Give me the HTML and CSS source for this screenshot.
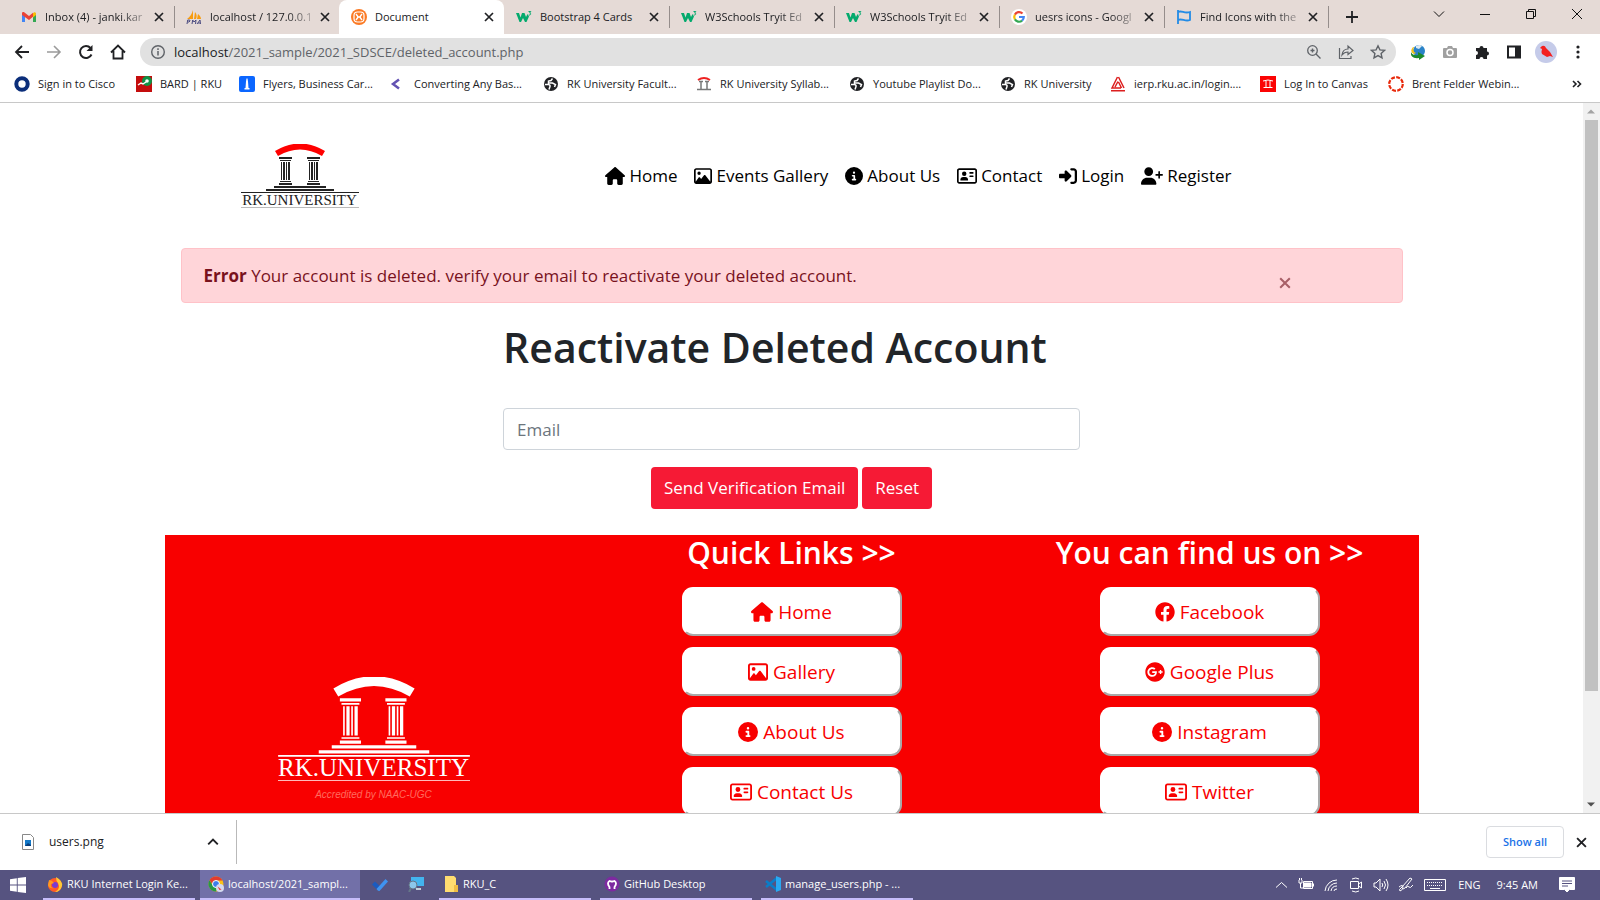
FILE: index.html
```html
<!DOCTYPE html>
<html lang="en">
<head>
<meta charset="utf-8">
<title>Document</title>
<link rel="stylesheet" href="styles.css">
</head>
<body>
<svg class="sprite" aria-hidden="true">
  <symbol id="house" viewBox="0 0 576 512"><path d="M575.8 255.500c0 18-15 32.100-32 32.100h-32l.7 160.200c0 2.700-.2 5.400-.5 8.100V472c0 22.100-17.900 40-40 40H392c-22.100 0-40-17.900-40-40V384c0-17.700-14.300-32-32-32H256c-17.700 0-32 14.300-32 32v88c0 22.100-17.900 40-40 40H104c-22.100 0-40-17.900-40-40V287.600H32c-18 0-32-14-32-32.100c0-9 3-17 10-24L266.400 8c7-7 15-8 22-8s15 2 21 7L564.800 231.500c8 7 12 15 11 24z"/></symbol>
  <symbol id="image" viewBox="0 0 512 512"><path d="M448 80c8.800 0 16 7.200 16 16V415.800l-5-6.500-136-176c-4.500-5.900-11.600-9.300-19-9.300s-14.400 3.400-19 9.300L202 340.700l-30.500-42.700C167 291.700 159.800 288 152 288s-15 3.700-19.500 10.100l-80 112L48 416.300V96c0-8.800 7.200-16 16-16H448zM64 32C28.700 32 0 60.700 0 96V416c0 35.300 28.700 64 64 64H448c35.300 0 64-28.700 64-64V96c0-35.300-28.700-64-64-64H64zm80 192a48 48 0 1 0 0-96 48 48 0 1 0 0 96z"/></symbol>
  <symbol id="info" viewBox="0 0 512 512"><path d="M256 512A256 256 0 1 0 256 0a256 256 0 1 0 0 512zM216 336h24V272H216c-13.300 0-24-10.700-24-24s10.700-24 24-24h48c13.300 0 24 10.700 24 24v88h8c13.300 0 24 10.700 24 24s-10.700 24-24 24H216c-13.300 0-24-10.700-24-24s10.700-24 24-24zm40-208a32 32 0 1 1 0 64 32 32 0 1 1 0-64z"/></symbol>
  <symbol id="card" viewBox="0 0 576 512"><path d="M512 80c8.800 0 16 7.200 16 16V416c0 8.800-7.200 16-16 16H64c-8.800 0-16-7.200-16-16V96c0-8.800 7.200-16 16-16H512zM64 32C28.700 32 0 60.700 0 96V416c0 35.300 28.700 64 64 64H512c35.300 0 64-28.700 64-64V96c0-35.300-28.700-64-64-64H64zM208 256a64 64 0 1 0 0-128 64 64 0 1 0 0 128zm-32 32c-44.200 0-80 35.800-80 80c0 8.800 7.200 16 16 16H304c8.800 0 16-7.200 16-16c0-44.200-35.800-80-80-80H176zM376 144c-13.300 0-24 10.700-24 24s10.700 24 24 24h80c13.300 0 24-10.700 24-24s-10.700-24-24-24H376zm0 96c-13.300 0-24 10.700-24 24s10.700 24 24 24h80c13.300 0 24-10.700 24-24s-10.700-24-24-24H376z"/></symbol>
  <symbol id="login" viewBox="0 0 512 512"><path d="M217.900 105.900L340.700 228.700c7.200 7.200 11.300 17.100 11.300 27.300s-4.100 20.100-11.300 27.300L217.900 406.100c-6.400 6.400-15 9.900-24 9.900c-18.700 0-33.900-15.200-33.900-33.900V320H32c-17.700 0-32-14.300-32-32V224c0-17.700 14.300-32 32-32H160V129.900c0-18.700 15.200-33.900 33.900-33.900c9 0 17.600 3.600 24 9.900zM352 416h64c17.700 0 32-14.300 32-32V128c0-17.700-14.300-32-32-32H352c-17.700 0-32-14.300-32-32s14.300-32 32-32h64c53 0 96 43 96 96V384c0 53-43 96-96 96H352c-17.700 0-32-14.300-32-32s14.300-32 32-32z"/></symbol>
  <symbol id="userplus" viewBox="0 0 640 512"><path d="M96 128a128 128 0 1 1 256 0A128 128 0 1 1 96 128zM0 482.300C0 383.800 79.800 304 178.300 304h91.400C368.200 304 448 383.800 448 482.300c0 16.400-13.300 29.700-29.700 29.700H29.700C13.300 512 0 498.700 0 482.300zM504 312V248H440c-13.300 0-24-10.700-24-24s10.700-24 24-24h64V136c0-13.300 10.700-24 24-24s24 10.700 24 24v64h64c13.300 0 24 10.700 24 24s-10.700 24-24 24H552v64c0 13.300-10.700 24-24 24s-24-10.700-24-24z"/></symbol>
  <symbol id="facebook" viewBox="0 0 512 512"><path d="M504 256C504 119 393 8 256 8S8 119 8 256c0 123.780 90.690 226.380 209.250 245V327.690h-63V256h63v-54.640c0-62.150 37-96.480 93.670-96.480 27.140 0 55.520 4.840 55.520 4.840v61h-31.280c-30.800 0-40.410 19.120-40.410 38.730V256h68.780l-11 71.690h-57.780V501C413.310 482.380 504 379.780 504 256z"/></symbol>
  <symbol id="gplus" viewBox="-8 0 512 512"><path d="M248 8C111.100 8 0 119.100 0 256s111.100 248 248 248 248-111.100 248-248S384.900 8 248 8zm-70.700 372c-68.800 0-124-55.500-124-124s55.200-124 124-124c31.300 0 60.100 11 83 32.300l-33.600 32.600c-13.200-12.900-31.300-19.100-49.400-19.100-42.900 0-77.200 35.500-77.200 78.100s34.200 78.100 77.200 78.100c32.600 0 64.900-19.100 70.100-53.300h-70.100v-42.600h116.900c1.300 6.800 1.900 13.600 1.900 20.700 0 70.800-47.500 121.200-118.800 121.200zm230.200-106.200v35.500H372v-35.500h-35.500v-35.500H372v-35.500h35.500v35.500h35.200v35.500h-35.200z"/></symbol>
  <symbol id="cross" viewBox="0 0 10 10"><path d="M1 1l8 8M9 1l-8 8" fill="none" stroke="currentColor" stroke-width="1.700"/></symbol>
  <symbol id="w3" viewBox="0 0 16 16"><path d="M0 4h3l1.500 4.500L6 4h2.500l1.500 4L11.500 5 13 7.500 10.500 13H9L7 9l-2 4H3.500z" fill="#04aa6d"/><path d="M12.500 2.500h2.300l-1.200 1.500c1.600 0 1.600 2.300-.9 2" fill="none" stroke="#04aa6d" stroke-width="1"/></symbol>
  <symbol id="globe" viewBox="0 0 16 16"><circle cx="8" cy="8" r="7" fill="#202124"/><path d="M2 8.500h3.500q2 .5 1.500 2L6 13.500M9.500 2.500L8 4.500 5.500 5v2h4l3 1.500-1 2.500" fill="none" stroke="#fff" stroke-width="1.500"/></symbol>
  <symbol id="columns" viewBox="0 0 118 56">
    <path d="M34 7Q59-8 84 7l-3 5Q59-1 37 12z" fill="var(--arch)"/>
    <g fill="currentColor">
      <path d="M38 13h13v2H38zM39 16h11v1H39zM39 37h11v1H39zM38 39h13v2H38zM66 13h13v2H66zM67 16h11v1H67zM67 37h11v1H67zM66 39h13v2H66zM33 42h52v2H33zM25 45h68v2H25zM0 48h118v1H0z"/>
      <path d="M40 18h1v18h-1zM42 18h2v18h-2zM45 18h1v18h-1zM47 18h2v18h-2zM68 18h1v18h-1zM70 18h2v18h-2zM73 18h1v18h-1zM75 18h2v18h-2z"/>
    </g>
  </symbol>
</svg>

<header class="browser">
  <div class="tabs">
    <div class="tab"><svg class="fav" viewBox="0 0 16 16"><path d="M1 4v9h3V7z" fill="#4285f4"/><path d="M15 4v9h-3V7z" fill="#34a853"/><path d="M12 4l2-1 1 1.500V6l-3 2.500z" fill="#fbbc04"/><path d="M1 6V4.500C1 3 2.500 2.700 3.500 3.500L8 7l4-3.200v4L8 11 1 6z" fill="#ea4335"/></svg><span class="title fade">Inbox (4) - janki.kar</span><button class="x" aria-label="Close tab"><svg><use href="#cross"/></svg></button></div>
    <div class="tab line-left"><svg class="fav" viewBox="0 0 16 16"><path d="M7 1v9H1c3-2 5-5 6-9zM9 3c2 2 2 5 1 7H8zM12 5c2 2 3 3 3 5h-4z" fill="#f89c0e"/><path d="M1 15l.7-4h2l.3 1-1 1H2M6 15l.7-4 1.300 2 2-2-.5 4M11 15l3-4 .5 4M12 14h2" fill="none" stroke="#4a4a80" stroke-width="1"/></svg><span class="title fade">localhost / 127.0.0.1</span><button class="x" aria-label="Close tab"><svg><use href="#cross"/></svg></button></div>
    <div class="tab active"><svg class="fav" viewBox="0 0 16 16"><circle cx="8" cy="8" r="8" fill="#fb7a24"/><rect x="3" y="3" width="10" height="10" rx="3.500" fill="none" stroke="#fff" stroke-width="1.200"/><path d="M5 5l2.200 3L5 11M11 5L8.800 8l2.200 3M6 8h4" fill="none" stroke="#fff" stroke-width="1.400"/></svg><span class="title">Document</span><button class="x" aria-label="Close tab"><svg><use href="#cross"/></svg></button></div>
    <div class="tab"><svg class="fav"><use href="#w3"/></svg><span class="title">Bootstrap 4 Cards</span><button class="x" aria-label="Close tab"><svg><use href="#cross"/></svg></button></div>
    <div class="tab line-left"><svg class="fav"><use href="#w3"/></svg><span class="title fade">W3Schools Tryit Ed</span><button class="x" aria-label="Close tab"><svg><use href="#cross"/></svg></button></div>
    <div class="tab line-left"><svg class="fav"><use href="#w3"/></svg><span class="title fade">W3Schools Tryit Ed</span><button class="x" aria-label="Close tab"><svg><use href="#cross"/></svg></button></div>
    <div class="tab line-left"><svg class="fav" viewBox="0 0 16 16"><circle cx="8" cy="8" r="8" fill="#fff"/><g fill="none" stroke-width="2.200"><path d="M11.500 4.500A4.800 4.800 0 0 0 3.900 5.600" stroke="#ea4335"/><path d="M3.900 5.600a4.800 4.800 0 0 0 0 4.800" stroke="#fbbc05"/><path d="M3.900 10.400a4.800 4.800 0 0 0 7.200 1.200" stroke="#34a853"/><path d="M11.100 11.600A4.800 4.800 0 0 0 12.800 8H8" stroke="#4285f4"/></g></svg><span class="title fade">uesrs icons - Googl</span><button class="x" aria-label="Close tab"><svg><use href="#cross"/></svg></button></div>
    <div class="tab line-left line-right"><svg class="fav" viewBox="0 0 16 16"><path d="M2 1v14M2 3c4-2 6 2 12 0v8c-5 2-8-2-12 0" fill="none" stroke="#228be6" stroke-width="1.800"/></svg><span class="title fade">Find Icons with the</span><button class="x" aria-label="Close tab"><svg><use href="#cross"/></svg></button></div>
    <button class="newtab" aria-label="New tab"><svg viewBox="0 0 12 12"><path d="M6 0v12M0 6h12" stroke="#202124" stroke-width="1.800"/></svg></button>
    <div class="winbtns">
      <button aria-label="Search tabs"><svg viewBox="0 0 12 12"><path d="M1 3.500l5 5 5-5" fill="none" stroke="#111" stroke-width="1"/></svg></button>
      <button aria-label="Minimize"><svg viewBox="0 0 12 12"><path d="M1 6.500h10" stroke="#111"/></svg></button>
      <button aria-label="Restore"><svg viewBox="0 0 12 12"><path d="M1.500 3.500h7v7h-7zM3.500 3.500v-2h7v7h-2" fill="none" stroke="#111"/></svg></button>
      <button aria-label="Close"><svg viewBox="0 0 12 12"><path d="M1 1l10 10M11 1L1 11" stroke="#111"/></svg></button>
    </div>
  </div>

  <div class="toolbar">
    <button class="tool" aria-label="Back"><svg viewBox="0 0 16 16"><path d="M15 8H2M8 2L2 8l6 6" fill="none" stroke="#202124" stroke-width="1.800"/></svg></button>
    <button class="tool" aria-label="Forward"><svg viewBox="0 0 16 16"><path d="M1 8h13M8 2l6 6-6 6" fill="none" stroke="#9b9b9b" stroke-width="1.600"/></svg></button>
    <button class="tool" aria-label="Reload"><svg viewBox="0 0 16 16"><path d="M13.500 10.500A6 6 0 1 1 12.500 4" fill="none" stroke="#202124" stroke-width="2"/><path d="M14.500 1v6h-6z" fill="#202124"/></svg></button>
    <button class="tool" aria-label="Home"><svg viewBox="0 0 16 16"><path d="M1 8.500L8 1.500l7 7M3.500 7v7.500h9V7" fill="none" stroke="#202124" stroke-width="1.800"/></svg></button>
    <div class="omnibox">
      <svg class="s16" viewBox="0 0 16 16"><circle cx="8" cy="8" r="6.300" fill="none" stroke="#5f6368" stroke-width="1.400"/><path d="M8 7v4.500M8 4.300v1.600" stroke="#5f6368" stroke-width="1.500"/></svg>
      <span class="url">localhost<span class="path">/2021_sample/2021_SDSCE/deleted_account.php</span></span>
      <svg class="s16 end" viewBox="0 0 16 16"><path d="M10 10l4.500 4.500M4.500 6.500h4M6.500 4.500v4" stroke="#5f6368" stroke-width="1.400"/><circle cx="6.500" cy="6.500" r="4.800" fill="none" stroke="#5f6368" stroke-width="1.300"/></svg>
      <svg class="s16" viewBox="0 0 16 16"><path d="M1.500 4v10.500H13V12M4 11c.500-4 3-6 6-6V2l5 4.500-5 4V8c-3 0-4.500 1-6 3z" fill="none" stroke="#5f6368" stroke-width="1.200"/></svg>
      <svg class="s16" viewBox="0 0 16 16"><path d="M8 1.800l1.900 4.100 4.500.500-3.300 3 .9 4.500L8 11.600l-4 2.300.9-4.500-3.300-3 4.500-.5z" fill="none" stroke="#5f6368" stroke-width="1.400"/></svg>
    </div>
    <button class="tool first" aria-label="Download manager"><svg viewBox="0 0 16 16"><circle cx="9" cy="7" r="6" fill="#2a83c8"/><path d="M6 2q4-2 6 0L9 5 6 4z" fill="#dfe9f0"/><path d="M1 8q2 4 7 3V8l7 4-6 4v-2Q0 15 1 8z" fill="#1c8a2c"/><path d="M3 3q-4 5 1 7l2-1Q2 7 4 3z" fill="#f0c219"/></svg></button>
    <button class="tool" aria-label="Screenshot"><svg viewBox="0 0 16 16"><path d="M2 4h3l1-2h4l1 2h3q1 0 1 1v8q0 1-1 1H2q-1 0-1-1V5q0-1 1-1z" fill="#a0a0a0"/><circle cx="8" cy="8.500" r="3" fill="#a0a0a0" stroke="#fff" stroke-width="1.500"/></svg></button>
    <button class="tool" aria-label="Extensions"><svg viewBox="0 0 16 16"><path d="M2 4h3.500a2 2 0 1 1 4 0H13v3.500a2 2 0 1 1 0 4V15H9.500a2 2 0 1 0-4 0H2v-4a2 2 0 1 0 0-4z" fill="#202124"/></svg></button>
    <button class="tool" aria-label="Side panel"><svg viewBox="0 0 16 16"><path d="M2 2.500h12v11H2z" fill="none" stroke="#202124" stroke-width="2"/><path d="M9 2h5v12H9z" fill="#202124"/></svg></button>
    <button class="tool avatar" aria-label="Profile"><svg viewBox="0 0 22 22"><circle cx="11" cy="11" r="11" fill="#c5cbe9"/><path d="M5 7l2-2q3-1 4 2l4 4 3 5-3-1-3 1-5-3Q6 11 7 8z" fill="#f32020"/></svg></button>
    <button class="tool" aria-label="Menu"><svg viewBox="0 0 16 16" fill="#202124"><circle cx="8" cy="3" r="1.600"/><circle cx="8" cy="8" r="1.600"/><circle cx="8" cy="13" r="1.600"/></svg></button>
  </div>

  <nav class="bookmarks">
    <a href="#"><svg viewBox="0 0 16 16"><circle cx="8" cy="8" r="5.700" fill="#fff" stroke="#0b2e7a" stroke-width="4"/></svg>Sign in to Cisco</a>
    <a href="#"><svg viewBox="0 0 16 16"><path d="M0 0h16v16H0z" fill="#c40d0d"/><circle cx="11" cy="5" r="5" fill="#0f9246"/><circle cx="11" cy="5" r="1.800" fill="#fff"/><path d="M2 9l3-2 2 1 3-2" stroke="#fff" fill="none" stroke-width="1.500"/></svg>BARD | RKU</a>
    <a href="#"><svg viewBox="0 0 16 16"><rect width="16" height="16" rx="2" fill="#0b66ff"/><path d="M7.500 2.500h1l.500 3 .5 6.500h1v1.500h-5V12h1L7 5.500z" fill="#fff"/></svg>Flyers, Business Car...</a>
    <a href="#"><svg viewBox="0 0 16 16"><path d="M9 3.500L3 8l6 4.500" fill="none" stroke="#6352b3" stroke-width="2.500"/></svg>Converting Any Bas...</a>
    <a href="#"><svg><use href="#globe"/></svg>RK University Facult...</a>
    <a href="#"><svg viewBox="0 0 16 16"><path d="M2 4q6-4 12 0" stroke="#e22" stroke-width="2" fill="none"/><path d="M5 5v8M11 5v8M3 5.500h4M9 5.500h4M1 13.500h14" stroke="#777" stroke-width="1.500"/></svg>RK University Syllab...</a>
    <a href="#"><svg><use href="#globe"/></svg>Youtube Playlist Do...</a>
    <a href="#"><svg><use href="#globe"/></svg>RK University</a>
    <a href="#"><svg viewBox="0 0 16 16"><path d="M7.500 1L2 12h9M8.500 1L14 12M8 5.500L5 11M8.500 6l3 6M1 14.800h14" fill="none" stroke="#dc1f1f" stroke-width="1.500"/></svg>ierp.rku.ac.in/login....</a>
    <a href="#"><svg viewBox="0 0 16 16"><path d="M0 0h16v16H0z" fill="#fb0404"/><path d="M3 5q5-2 10 0M6 5v6M10 5v6M3.500 11.500h9" stroke="#fff" fill="none"/></svg>Log In to Canvas</a>
    <a href="#"><svg viewBox="0 0 16 16"><circle cx="8" cy="8" r="6.800" fill="none" stroke="#e8290b" stroke-width="2.200" stroke-dasharray="4 1.340"/></svg>Brent Felder Webin...</a>
    <button class="more" aria-label="More bookmarks"><svg viewBox="0 0 10 10"><path d="M1 2l3 3-3 3M5.500 2l3 3-3 3" fill="none" stroke="#202124" stroke-width="1.600"/></svg></button>
  </nav>
</header>

<div class="viewport">
  <div class="page">
    <div class="container">
      <div class="masthead">
        <a class="logo" href="#" aria-label="RK University"><svg><use href="#columns"/></svg><span>RK.UNIVERSITY</span></a>
        <nav class="menu">
          <a href="#"><svg class="wide"><use href="#house"/></svg>Home</a>
          <a href="#"><svg><use href="#image"/></svg>Events Gallery</a>
          <a href="#"><svg><use href="#info"/></svg>About Us</a>
          <a href="#"><svg class="wide"><use href="#card"/></svg>Contact</a>
          <a href="#"><svg><use href="#login"/></svg>Login</a>
          <a href="#"><svg class="wider"><use href="#userplus"/></svg>Register</a>
        </nav>
      </div>
      <main>
        <div class="alert" role="alert"><p><strong>Error</strong> Your account is deleted. verify your email to reactivate your deleted account.</p><button aria-label="Dismiss"><svg><use href="#cross"/></svg></button></div>
        <form class="reactivate">
          <h1>Reactivate Deleted Account</h1>
          <input type="email" placeholder="Email" aria-label="Email">
          <div class="actions"><button type="button">Send Verification Email</button><button type="reset">Reset</button></div>
        </form>
      </main>
      <footer class="footer">
        <div class="brand"><div class="biglogo"><svg><use href="#columns"/></svg><span class="name">RK.UNIVERSITY</span><span class="motto">Accredited by NAAC-UGC</span></div></div>
        <section><h2>Quick Links &gt;&gt;</h2>
          <button><svg class="wide"><use href="#house"/></svg>Home</button>
          <button><svg><use href="#image"/></svg>Gallery</button>
          <button><svg><use href="#info"/></svg>About Us</button>
          <button><svg class="wide"><use href="#card"/></svg>Contact Us</button>
        </section>
        <section><h2>You can find us on &gt;&gt;</h2>
          <button><svg><use href="#facebook"/></svg>Facebook</button>
          <button><svg><use href="#gplus"/></svg>Google Plus</button>
          <button><svg><use href="#info"/></svg>Instagram</button>
          <button><svg class="wide"><use href="#card"/></svg>Twitter</button>
        </section>
      </footer>
    </div>
  </div>
  <div class="scrollbar"><svg viewBox="0 0 16 16"><path d="M4 10l4-4 4 4z" fill="#a3a3a3"/></svg><div class="thumb"></div><svg viewBox="0 0 16 16"><path d="M4 6l4 4 4-4z" fill="#505050"/></svg></div>
</div>

<div class="downloads">
  <div class="file"><svg class="s16" viewBox="0 0 16 16"><path d="M2.500.500h8l3 3v12h-11z" fill="#fff" stroke="#888"/><path d="M5 6h6v6H5z" fill="#1379c8"/><path d="M5 12l3-3 3 2v1z" fill="#0a3f7c"/></svg><span>users.png</span><button aria-label="File options"><svg viewBox="0 0 10 10"><path d="M1 7l4-4 4 4" fill="none" stroke="#202124" stroke-width="1.600"/></svg></button></div>
  <button class="showall">Show all</button>
  <button class="closebar" aria-label="Close downloads"><svg><use href="#cross"/></svg></button>
</div>

<div class="taskbar">
  <button class="start" aria-label="Start"><svg viewBox="0 0 16 16"><path d="M0 2.200l6.800-.9v6.200H0zM7.700 1.100L16 0v7.500H7.700zM0 8.400h6.800v6.300L0 13.800zM7.700 8.400H16V16l-8.300-1.100z" fill="#fff"/></svg></button>
  <button class="task open"><svg viewBox="0 0 16 16"><circle cx="8" cy="9" r="7" fill="#ff5a26"/><path d="M9 1q7 4 6 9-2 6-7 6 6-3 3-9-2-2-2-6z" fill="#ffc935"/><circle cx="8" cy="9" r="3" fill="#7a3bd0"/><path d="M2 4q3 0 5 3l-3 1q-1 4 3 4-5 1-6-3z" fill="#ff9a1f"/></svg><span>RKU Internet Login Ke...</span></button>
  <button class="task open current"><svg viewBox="0 0 16 16"><circle cx="8" cy="8" r="7.500" fill="#fbc116"/><path d="M1.500 4.200A7.500 7.500 0 0 1 14.500 4.500H8L5 9z" fill="#e33b2e"/><path d="M1.500 4.200A7.500 7.500 0 0 0 8 15.500L10 11l-5-1z" fill="#279847"/><circle cx="8" cy="8" r="3.500" fill="#3b7ded" stroke="#fff"/><circle cx="12" cy="12" r="4" fill="#d5d9ee"/><path d="M9.500 10.500l4 3-2 .500z" fill="#e33"/></svg><span>localhost/2021_sampl...</span></button>
  <button class="task pin" aria-label="To Do"><svg viewBox="0 0 16 16"><path d="M0 8.500l3-3 4.500 4.500-3 3z" fill="#1b5bbf"/><path d="M4.500 13l9-10L16 5.500 7.500 15q-1.500.5-3-2z" fill="#3f93f0"/></svg></button>
  <button class="task pin" aria-label="Remote search"><svg viewBox="0 0 16 16"><path d="M3 1h13v9H3z" fill="#43b4ee"/><path d="M8 12h5v2H8z" fill="#c4d0da"/><circle cx="5" cy="9" r="4" fill="#8cc7ea" stroke="#678"/><path d="M3 12l-2 4" stroke="#678" stroke-width="2"/></svg></button>
  <button class="task open"><svg viewBox="0 0 16 16"><path d="M2 0h9l2 2v14H2z" fill="#ffdc70"/><path d="M11 9h4v7h-4z" fill="#f0bd45"/></svg><span>RKU_C</span></button>
  <button class="task open"><svg viewBox="0 0 16 16"><circle cx="8" cy="8" r="7.500" fill="#7d2aa0"/><path d="M5.500 13v-2q-3-4 0-6l2 .500h1l2-.500q3 2 0 6v2" fill="none" stroke="#fff" stroke-width="1.800"/></svg><span>GitHub Desktop</span></button>
  <button class="task open"><svg viewBox="0 0 16 16"><path d="M1 5l11 9M1 11l11-9" stroke="#0a7dc8" stroke-width="2.500"/><path d="M11 0l5 2v12l-5 2z" fill="#2aa9f2"/></svg><span>manage_users.php - ...</span></button>
  <div class="tray">
    <svg viewBox="0 0 16 16"><path d="M3 10.500l5.500-5 5.500 5"/></svg>
    <svg viewBox="0 0 16 16"><path d="M5.500 4.500h9v7h-9z"/><path d="M6 6h7v4H6z" fill="#fff"/><path d="M1 3v3h3V3M2.500 6v5h3M1.500 1v2M3.500 1v2M15.500 6.500v3"/></svg>
    <svg viewBox="0 0 16 16"><path d="M2 14A12 12 0 0 1 14 3M5 14a9 9 0 0 1 9-8M8 14a6 6 0 0 1 6-5M11 14q0-2 3-2"/></svg>
    <svg viewBox="0 0 16 16"><path d="M4 2q4-2 7 0M4 14q4 2 7 0M2.500 4.500h8v7h-8zM10.500 7l3-2v6l-3-2"/></svg>
    <svg viewBox="0 0 16 16"><path d="M1 6h2l4-4v12l-4-4H1zM9 6q1.500 2 0 4M11 4q3 4 0 8M13 2q4 6 0 12"/></svg>
    <svg viewBox="0 0 16 16"><path d="M1 10q4-3 4 0t-3 4q-2-1 2-4L12 1l2 1-7 9-2 1M8 11q2-3 3-1t4-2"/></svg>
    <svg class="keys" viewBox="0 0 24 16"><path d="M1.500 2.500h21v11h-21z"/><path d="M4 5.500h16M4 8.500h16" stroke-dasharray="1 1"/><path d="M7 11.500h10"/></svg>
    <span class="lang">ENG</span><span class="clock">9:45 AM</span>
    <svg class="note" viewBox="0 0 16 16"><path d="M.5.500h15v12h-5L8 15l-2.500-2.500h-5z" fill="#fff"/><path d="M3 4h10M3 6.500h10M3 9h6" stroke="#565380"/></svg>
  </div>
</div>
</body>
</html>
```
FILE: styles.css
```css
* { box-sizing: border-box; }
body {
  margin: 0;
  height: 100vh;
  display: flex;
  flex-direction: column;
  overflow: hidden;
  background: #fff;
  color: #202124;
  font: 11px/16px "Open Sans", "Noto Sans", sans-serif;
}
button { border: 0; padding: 0; background: none; color: inherit; font: inherit; }
a { color: inherit; text-decoration: none; }
svg { display: block; flex: none; }
.sprite { position: absolute; width: 0; height: 0; }
.s16 { width: 16px; height: 16px; }

/* browser frame */
.browser { flex: none; border-bottom: 1px solid #c8c8c8; }
.tabs { display: flex; height: 34px; padding-left: 9px; background: #e5dad6; }
.tab { display: flex; align-items: center; width: 165px; padding: 0 9px 0 11px; gap: 8px; border-left: 1px solid transparent; }
.tab.line-left { border-image: linear-gradient(#0000 7px, #958d8b 7px 27px, #0000 27px) 1; border-style: solid; border-width: 0 0 0 1px; }
.tab.line-right { border-width: 0 1px; }
.tab.active { background: #fff; border-radius: 8px 8px 0 0; }
.fav { width: 16px; height: 16px; }
.title { flex: 1; white-space: nowrap; }
.fade { mask-image: linear-gradient(90deg, #000 75%, #0004); }
.x { width: 12px; }
.x svg { width: 10px; height: 10px; margin: auto; }
.newtab { width: 46px; }
.newtab svg { width: 12px; height: 12px; margin: auto; }
.winbtns { display: flex; margin-left: auto; height: 28px; }
.winbtns button { width: 46px; }
.winbtns svg { width: 12px; height: 12px; margin: auto; }

.toolbar { display: flex; align-items: center; height: 36px; padding: 0 6px; }
.tool { width: 32px; }
.tool svg { width: 16px; height: 16px; margin: auto; }
.tool.first { margin-left: 6px; }
.tool.avatar svg { width: 22px; height: 22px; }
.omnibox { flex: 1; display: flex; align-items: center; gap: 8px; height: 28px; margin-left: 6px; padding: 0 10px; border-radius: 14px; background: #e1e1e1; font-size: 13px; }
.omnibox .end { margin-left: auto; }
.omnibox .s16 + .s16 { margin-left: 8px; }
.path { color: #5f6368; }

.bookmarks { display: grid; grid-template-columns: 122px 103px 151px 153px 153px 153px 151px 110px 150px 128px 1fr auto; align-items: center; height: 32px; padding: 0 18px 4px 14px; }
.bookmarks a { display: flex; align-items: center; gap: 8px; white-space: nowrap; }
.bookmarks svg { width: 16px; height: 16px; }
.bookmarks .more svg { width: 10px; height: 10px; }

/* page */
.viewport { flex: 1; min-height: 0; display: flex; }
.page { flex: 1; overflow: hidden; font-size: 17px; line-height: 26px; color: #212529; }
.container { width: 80%; max-width: 1254px; margin: 0 auto; }
.masthead { display: flex; align-items: center; justify-content: space-between; height: 145px; padding: 0 187px 0 76px; }
.logo { --arch: #f00; display: flex; flex-direction: column; width: 118px; color: #222; }
.logo svg { width: 118px; height: 56px; margin-bottom: -6px; }
.logo span { border-bottom: 1px solid #bbb; text-align: center; font: 15px/13px "Liberation Serif", serif; }
.menu { display: flex; gap: 17px; color: #000; }
.menu a { display: flex; align-items: center; gap: 4px; white-space: nowrap; }
.menu svg { width: 18px; height: 18px; fill: #000; }
.menu .wide { width: 20px; }
.menu .wider { width: 22px; }

.alert { display: flex; justify-content: space-between; margin: 0 16px; padding: 14px 111px 13px 22px; border: 1px solid #ffc2c8; border-radius: 4px; background: #ffd5d9; color: #79121d; }
.alert p { margin: 0; }
.alert button { padding-top: 13px; }
.alert svg { width: 12px; height: 12px; color: #a85f67; }

.reactivate { width: 46%; margin: 0 auto; padding: 18px 0 26px; }
.reactivate h1 { margin: 0 0 34px; font-size: 41px; line-height: 53px; font-weight: 600; white-space: nowrap; }
.reactivate input { display: block; width: 100%; height: 42px; padding: 0 13px; border: 1px solid #ced4da; border-radius: 4px; font: inherit; }
.reactivate input::placeholder { color: #6c757d; opacity: 1; }
.actions { display: flex; justify-content: center; gap: 4px; margin-top: 17px; }
.actions button { height: 42px; padding: 0 13px; border-radius: 4px; background: #f61a35; color: #fff; }

.footer { display: grid; grid-template-columns: repeat(3, 1fr); background: #f80000; color: #fff; }
.footer section { display: flex; flex-direction: column; align-items: center; gap: 11px; padding-bottom: 20px; }
.footer h2 { margin: 0 0 5px; font-size: 30px; line-height: 36px; font-weight: 600; }
.footer button { display: flex; align-items: center; justify-content: center; gap: 5px; width: 220px; height: 49px; border: 2px solid; border-color: #fff #a9a9a9 #a9a9a9 #fff; border-radius: 11px; background: #fff; color: #f80000; font-size: 19px; }
.footer button svg { width: 20px; height: 20px; fill: currentColor; }
.footer button .wide { width: 22px; }
.brand { display: flex; justify-content: center; padding-top: 142px; }
.biglogo { --arch: #fff; display: flex; flex-direction: column; width: 192px; text-align: center; }
.biglogo svg { width: 192px; height: 91px; margin-bottom: -12px; }
.name { border-bottom: 1px solid #fbb; font: 25px/24px "Liberation Serif", serif; }
.motto { margin-top: 6px; color: #ff6b5e; font: italic 10px/16px "Liberation Sans", sans-serif; }

.scrollbar { display: flex; flex-direction: column; width: 17px; background: #f1f1f1; }
.scrollbar svg { width: 16px; height: 17px; }
.thumb { width: 13px; height: 571px; margin: 0 auto auto; background: #c1c1c1; }

/* download shelf */
.downloads { flex: none; display: flex; align-items: center; height: 57px; border-top: 1px solid #c8c8c8; }
.file { display: flex; align-items: center; width: 237px; height: 44px; padding: 0 17px 0 20px; border-right: 1px solid #b9b9b9; }
.file span { flex: 1; margin-left: 13px; font-size: 12px; }
.file button svg { width: 12px; height: 12px; }
.showall { margin-left: auto; width: 78px; height: 32px; border: 1px solid #dadce0; border-radius: 4px; color: #1a73e8; font-weight: 600; }
.closebar { padding: 0 13px 0 12px; }
.closebar svg { width: 11px; height: 11px; }

/* taskbar */
.taskbar { flex: none; display: flex; height: 30px; background: #565380; color: #fff; }
.start { width: 36px; }
.start svg { width: 16px; height: 16px; margin: auto; }
.task { display: flex; align-items: center; gap: 4px; width: 152px; margin-left: 9px; padding: 0 4px; border-bottom: 2px solid transparent; }
.task svg { width: 16px; height: 16px; }
.task span { white-space: nowrap; }
.task.open { border-color: #c7bdfa; }
.start + .task { margin-left: 7px; }
.task.current { width: 160px; margin-left: 5px; padding-left: 8px; background: #7270a8; }
.task.pin { width: 36px; margin: 0; padding: 0 12px; }
.task.pin + .open { margin-left: 7px; }
.tray { display: flex; align-items: center; gap: 9px; margin-left: auto; padding-right: 25px; }
.tray svg { width: 16px; height: 16px; fill: none; stroke: #fff; }
.tray .keys { width: 24px; }
.lang { margin-left: 2px; }
.clock { margin: 0 12px 0 7px; }
```
